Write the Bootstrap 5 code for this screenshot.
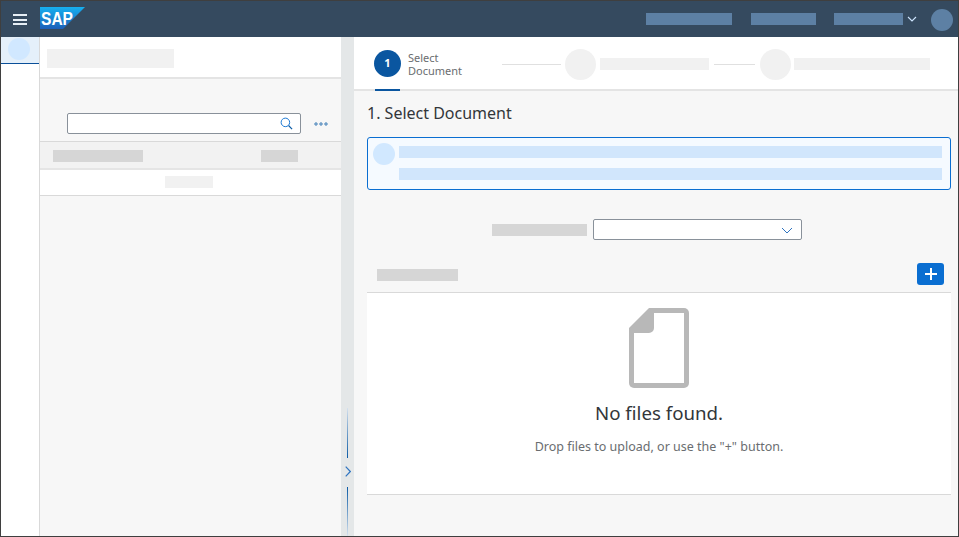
<!DOCTYPE html>
<html lang="en">
<head>
  <meta charset="UTF-8" />
  <meta name="viewport" content="width=device-width, initial-scale=1" />
  <title>Select Document</title>
  <link href="https://cdn.jsdelivr.net/npm/bootstrap@5.3.3/dist/css/bootstrap.min.css" rel="stylesheet" />
  <style>
    html, body { height: 100%; }
    body {
      margin: 0;
      overflow: hidden;
      background: #f7f7f7;
      font-family: "Noto Sans", "Liberation Sans", sans-serif;
      color: #32363a;
    }
    .app-frame { width: 959px; height: 537px; border: 1px solid #3f3f3f; }
    .shell-bar { height: 36px; background: #354a5f; padding: 0 5px 0 12px; flex: none; }
    .burger { width: 14px; height: 11px; border-top: 2px solid #e6eef5; border-bottom: 2px solid #e6eef5; position: relative; margin-top: 1px; }
    .burger::after { content: ""; position: absolute; left: 0; right: 0; top: 2.5px; height: 2px; background: #e6eef5; }
    .sap-logo { margin-left: 13px; margin-top: -2px; display: block; }
    .shell-item { height: 12px; background: #5d80a4; margin-right: 19px; }
    .shell-item.w-65 { margin-right: 18px; }
    .shell-avatar { width: 22px; height: 22px; border-radius: 50%; background: #5d80a4; margin-left: 14px; margin-top: 1px; }

    .side-rail { width: 39px; background: #fff; border-right: 1px solid #d9d9d9; flex: none; }
    .rail-item { height: 27px; background: #e5f0fa; border-bottom: 1px solid #0a4f99; padding: 1px 0 0 7px; }
    .rail-dot { width: 22px; height: 22px; border-radius: 50%; background: #d1e8ff; }

    .list-pane { width: 301px; flex: none; background: #f7f7f7; }
    .pane-head { height: 42px; background: #fff; border-bottom: 2px solid #e4e4e4; padding: 12px 7px; }
    .search-row { padding: 34px 13px 7px 27px; }
    .search-box { width: 234px; height: 21px; background: #fff; border: 1px solid #89919a; border-radius: 2px; padding: 0 7px 0 0; }
    .more-dots { margin-left: 13px; margin-top: 1px; }
    .grid-head { height: 29px; background: #f2f2f2; border-top: 1px solid #d9d9d9; border-bottom: 2px solid #e5e5e5; padding: 8px 13px; }
    .grid-row { height: 26px; background: #fff; border-bottom: 1px solid #d9d9d9; padding: 6px 4px 0 0; }

    .sash { width: 13px; background: #e4e7e8; flex: none; padding-top: 371px; }
    .sash-line { width: 1px; height: 50px; margin-left: 6px; background: linear-gradient(to bottom, #d5e1ee, #0a5aa5); }
    .sash-line.flip { height: 49px; background: linear-gradient(to top, #d5e1ee, #0a5aa5); }
    .sash-arrow { display: block; margin: 8px 0 10px 4px; }

    .main-pane { min-width: 0; background: #f7f7f7; }
    .wizard-bar { height: 54px; background: #fff; border-bottom: 2px solid #e4e4e4; padding: 12px 0 0 20px; flex: none; position: relative; }
    .step-now { width: 27px; height: 27px; margin-top: 1px; border-radius: 50%; background: #0a56a0; color: #fff; font-size: 11px; font-weight: 700; }
    .step-text { width: 94px; padding-right: 30px; margin-left: 7px; margin-top: 2px; font-size: 11px; line-height: 13px; color: #6a6d70; }
    .step-mark { position: absolute; left: 21px; bottom: -2px; width: 25px; height: 2px; background: #0a56a0; }
    .step-rule { height: 1px; background: #e0e0e0; margin-top: 15px; }
    .step-dot { width: 31px; height: 31px; border-radius: 50%; background: #f1f1f1; flex: none; }
    .wiz-a { width: 59px; margin-right: 4px; }
    .wiz-b { width: 109px; margin: 9px 5px 0 4px; }
    .wiz-c { width: 41px; margin-right: 5px; }
    .wiz-d { width: 136px; margin: 9px 0 0 3px; }

    .page-title { font-size: 16px; font-weight: 400; line-height: 22px; margin: 11px 0 13px 13px; color: #32363a; }
    .info-strip { height: 53px; margin: 0 7px 0 13px; background: #f5faff; border: 1px solid #0a6ed1; border-radius: 3px; padding: 5px 8px 0 5px; }
    .strip-dot { width: 22px; height: 22px; border-radius: 50%; background: #d1e8ff; flex: none; }
    .strip-lines { gap: 10px; margin-left: 4px; padding-top: 3px; }
    .picker-row { padding-top: 29px; padding-left: 138px; }
    .picker { width: 209px; height: 21px; margin-left: 6px; background: #fff; border: 1px solid #89919a; border-radius: 2px; padding: 0 8px 0 0; }
    .chev { margin-top: 1px; }
    .files-bar { height: 52px; padding: 23px 7px 0 23px; }
    .files-label { margin-top: 6px; }
    .add-btn { width: 27px; height: 22px; margin-right: 7px; padding: 0; border: 0; border-radius: 3px; background: #0a6ed1; }
    .add-btn:hover { background: #0a6ed1; }
    .files-panel { height: 203px; margin: 0 7px 0 13px; background: #fff; border-top: 1px solid #d9d9d9; border-bottom: 1px solid #d9d9d9; padding-top: 15px; }
    .empty-title { font-size: 18.7px; line-height: 27px; margin: 11px 0 0; font-weight: 400; color: #32363a; }
    .empty-hint { font-size: 12.5px; line-height: 16px; margin: 13px 0 0; color: #6a6d70; }

    .bone { display: block; height: 12px; flex: none; }
    .bone-soft { background: #f1f1f1; }
    .bone-mid { background: #d6d6d6; }
    .bone-blue { background: #d1e6fc; }
    .w-h { width: 127px; height: 19px; }
    .w-90 { width: 90px; }
    .w-37 { width: 37px; }
    .w-48 { width: 48px; }
    .w-95 { width: 95px; }
    .w-81 { width: 81px; }
    .w-86 { width: 86px; }
    .w-65 { width: 65px; }
    .w-69 { width: 69px; }
    .gap-head { margin-left: 118px; }
  </style>
</head>
<body>

  <div class="app-frame d-flex flex-column">

    <!-- shell bar -->
    <header class="shell-bar d-flex align-items-center">
      <div class="burger"></div>
      <svg class="sap-logo" width="46" height="22" viewBox="0 0 46 22">
        <defs>
          <linearGradient id="sapBlue" x1="0" y1="1" x2="0" y2="0">
            <stop offset="0" stop-color="#1c5fb8" />
            <stop offset="1" stop-color="#17b0f0" />
          </linearGradient>
        </defs>
        <polygon points="0,0 45,0 23,22 0,22" fill="url(#sapBlue)" />
        <text x="1" y="18" font-family="Liberation Sans" font-weight="700" font-size="18" fill="#fff" textLength="32" lengthAdjust="spacingAndGlyphs">SAP</text>
      </svg>
      <span class="ms-auto bone shell-item w-86"></span>
      <span class="bone shell-item w-65"></span>
      <span class="bone shell-item w-69 me-0"></span>
      <svg class="ms-1" width="10" height="6" viewBox="0 0 10 6"><path d="M1 1l4 4 4-4" fill="none" stroke="#cfe6ff" stroke-width="1.1" /></svg>
      <div class="shell-avatar"></div>
    </header>

    <div class="d-flex flex-grow-1 overflow-hidden">

      <!-- left rail -->
      <nav class="side-rail">
        <div class="rail-item"><div class="rail-dot"></div></div>
      </nav>

      <!-- list pane -->
      <section class="list-pane">
        <div class="pane-head"><span class="bone bone-soft w-h"></span></div>
        <div class="search-row d-flex align-items-center">
          <div class="search-box d-flex align-items-center justify-content-end">
            <svg width="13" height="13" viewBox="0 0 14 14"><circle cx="5.8" cy="5.8" r="4.6" fill="none" stroke="#0a6ed1" stroke-width="1" /><path d="M9.2 9.2l3.8 3.8" stroke="#0a5aa5" stroke-width="1.3" /></svg>
          </div>
          <svg class="more-dots" width="14" height="4" viewBox="0 0 14 4">
            <circle cx="2" cy="2" r="1.2" fill="none" stroke="#0a5aa5" stroke-width=".8" />
            <circle cx="7" cy="2" r="1.2" fill="none" stroke="#0a5aa5" stroke-width=".8" />
            <circle cx="12" cy="2" r="1.2" fill="none" stroke="#0a5aa5" stroke-width=".8" />
          </svg>
        </div>
        <div class="grid-head d-flex">
          <span class="bone bone-mid w-90"></span>
          <span class="bone bone-mid w-37 gap-head"></span>
        </div>
        <div class="grid-row d-flex justify-content-center">
          <span class="bone bone-soft w-48"></span>
        </div>
      </section>

      <!-- splitter -->
      <div class="sash">
        <div class="sash-line"></div>
        <svg class="sash-arrow" width="6" height="11" viewBox="0 0 6 11"><path d="M.7.7l4.6 4.8L.7 10.3" fill="none" stroke="#2f74c0" stroke-width="1.2" /></svg>
        <div class="sash-line flip"></div>
      </div>

      <!-- wizard -->
      <main class="main-pane flex-grow-1 d-flex flex-column">
        <div class="wizard-bar d-flex">
          <div class="step-now d-flex align-items-center justify-content-center flex-shrink-0">1</div>
          <div class="step-text flex-shrink-0">Select Document</div>
          <span class="step-mark"></span>
          <span class="step-rule wiz-a"></span>
          <span class="step-dot"></span>
          <span class="bone bone-soft wiz-b"></span>
          <span class="step-rule wiz-c"></span>
          <span class="step-dot"></span>
          <span class="bone bone-soft wiz-d"></span>
        </div>

        <h1 class="page-title">1. Select Document</h1>

        <div class="info-strip d-flex">
          <div class="strip-dot"></div>
          <div class="flex-grow-1 strip-lines d-flex flex-column">
            <span class="bone bone-blue"></span>
            <span class="bone bone-blue"></span>
          </div>
        </div>

        <div class="picker-row d-flex align-items-center">
          <span class="bone bone-mid w-95"></span>
          <div class="picker d-flex align-items-center justify-content-end">
            <svg class="chev" width="12" height="7" viewBox="0 0 12 7"><path d="M1 1l5 5 5-5" fill="none" stroke="#2f74c0" stroke-width="1" /></svg>
          </div>
        </div>

        <div class="files-bar d-flex justify-content-between">
          <span class="bone bone-mid w-81 files-label"></span>
          <button type="button" class="btn add-btn d-flex align-items-center justify-content-center" aria-label="Add">
            <svg width="14" height="14" viewBox="0 0 14 14"><path d="M7 1v12M1 7h12" stroke="#fff" stroke-width="2" /></svg>
          </button>
        </div>

        <div class="files-panel text-center">
          <svg width="60" height="80" viewBox="0 0 60 80" class="d-block mx-auto">
            <path d="M20 0H55a5 5 0 0 1 5 5V75a5 5 0 0 1-5 5H5a5 5 0 0 1-5-5V20Z" fill="#b8b8b8" />
            <path d="M25 5H55V75H5V25H20a5 5 0 0 0 5-5Z" fill="#fff" />
          </svg>
          <h2 class="empty-title">No files found.</h2>
          <p class="empty-hint">Drop files to upload, or use the "+" button.</p>
        </div>
      </main>
    </div>
  </div>

<script src="https://cdn.jsdelivr.net/npm/bootstrap@5.3.3/dist/js/bootstrap.bundle.min.js"></script>
</body>
</html>
